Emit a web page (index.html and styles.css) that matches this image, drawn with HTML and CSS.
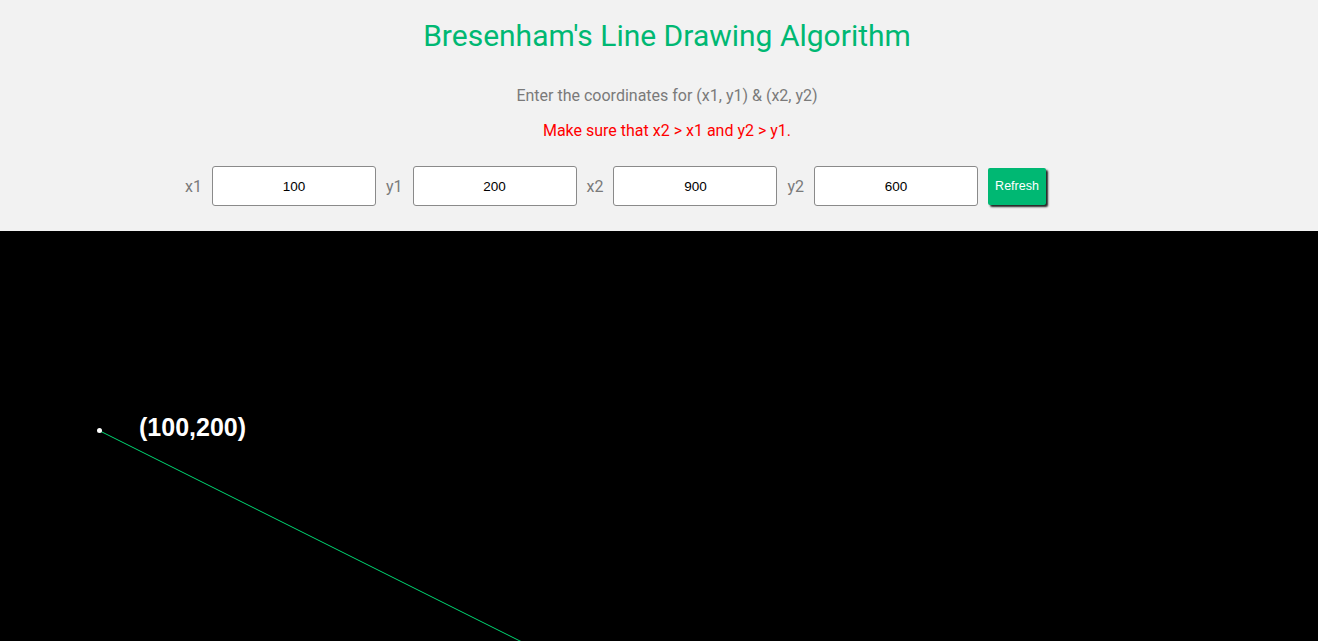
FILE: index.html
```html
<!DOCTYPE html>
<html>
<head>
<meta charset="utf-8">
<link rel="stylesheet" href="styles.css">
</head>
<body>
<header class="panel">
  <h1 class="title">Bresenham's Line Drawing Algorithm</h1>
  <p class="hint">Enter the coordinates for (x1, y1) &amp; (x2, y2)</p>
  <p class="warn">Make sure that x2 &gt; x1 and y2 &gt; y1.</p>
  <div class="row">
    <label class="lbl">x1</label><input class="field" value="100">
    <label class="lbl">y1</label><input class="field" value="200">
    <label class="lbl">x2</label><input class="field" value="900">
    <label class="lbl">y2</label><input class="field" value="600">
    <button class="btn">Refresh</button>
  </div>
</header>
<svg class="board" width="1318" height="800" viewBox="0 0 1318 800">
  <line x1="100" y1="200" x2="900" y2="600" stroke="#00d873" stroke-width="1"/>
  <circle cx="99.5" cy="199.5" r="2.5" fill="#fff"/>
  <text x="139" y="205" class="coord">(100,200)</text>
</svg>
</body>
</html>
```
FILE: styles.css
```css
html, body { margin: 0; padding: 0; background: #000; overflow: hidden; }
.panel {
  background: #f2f2f2;
  height: 231px;
  box-sizing: border-box;
  padding-top: 16px;
  font-family: Roboto, "Liberation Sans", sans-serif;
  text-align: center;
}
.title {
  margin: 0;
  padding-left: 16px;
  font-weight: 400;
  font-size: 30px;
  line-height: 40px;
  color: #00b873;
}
.hint {
  margin: 30px 0 0;
  padding-left: 16px;
  font-size: 16px;
  line-height: 20px;
  color: #7a7a7a;
}
.warn {
  margin: 15px 0 0;
  padding-left: 16px;
  font-size: 16px;
  line-height: 20px;
  color: #ff0000;
}
.row {
  display: flex;
  align-items: center;
  padding-left: 185px;
  margin-top: 25px;
}
.lbl {
  font-size: 16px;
  color: #7a7a7a;
  margin-right: 10px;
}
.field {
  box-sizing: border-box;
  width: 164px;
  height: 40px;
  border: 1px solid #8a8a8a;
  border-radius: 3px;
  background: #fff;
  text-align: center;
  font-family: "Liberation Sans", Arial, sans-serif;
  font-size: 13.5px;
  color: #000;
  margin-right: 10px;
  padding: 0;
}
.btn {
  box-sizing: border-box;
  width: 58px;
  height: 37px;
  border: none;
  border-radius: 2px;
  background: #00b873;
  color: #fff;
  font-family: "Liberation Sans", Arial, sans-serif;
  font-size: 12.5px;
  box-shadow: 2px 2px 2px #222;
  padding: 0;
}
.board { display: block; background: #000; }
.coord {
  font-family: "Liberation Sans", Arial, sans-serif;
  font-weight: 700;
  font-size: 25px;
  fill: #fff;
}
```
